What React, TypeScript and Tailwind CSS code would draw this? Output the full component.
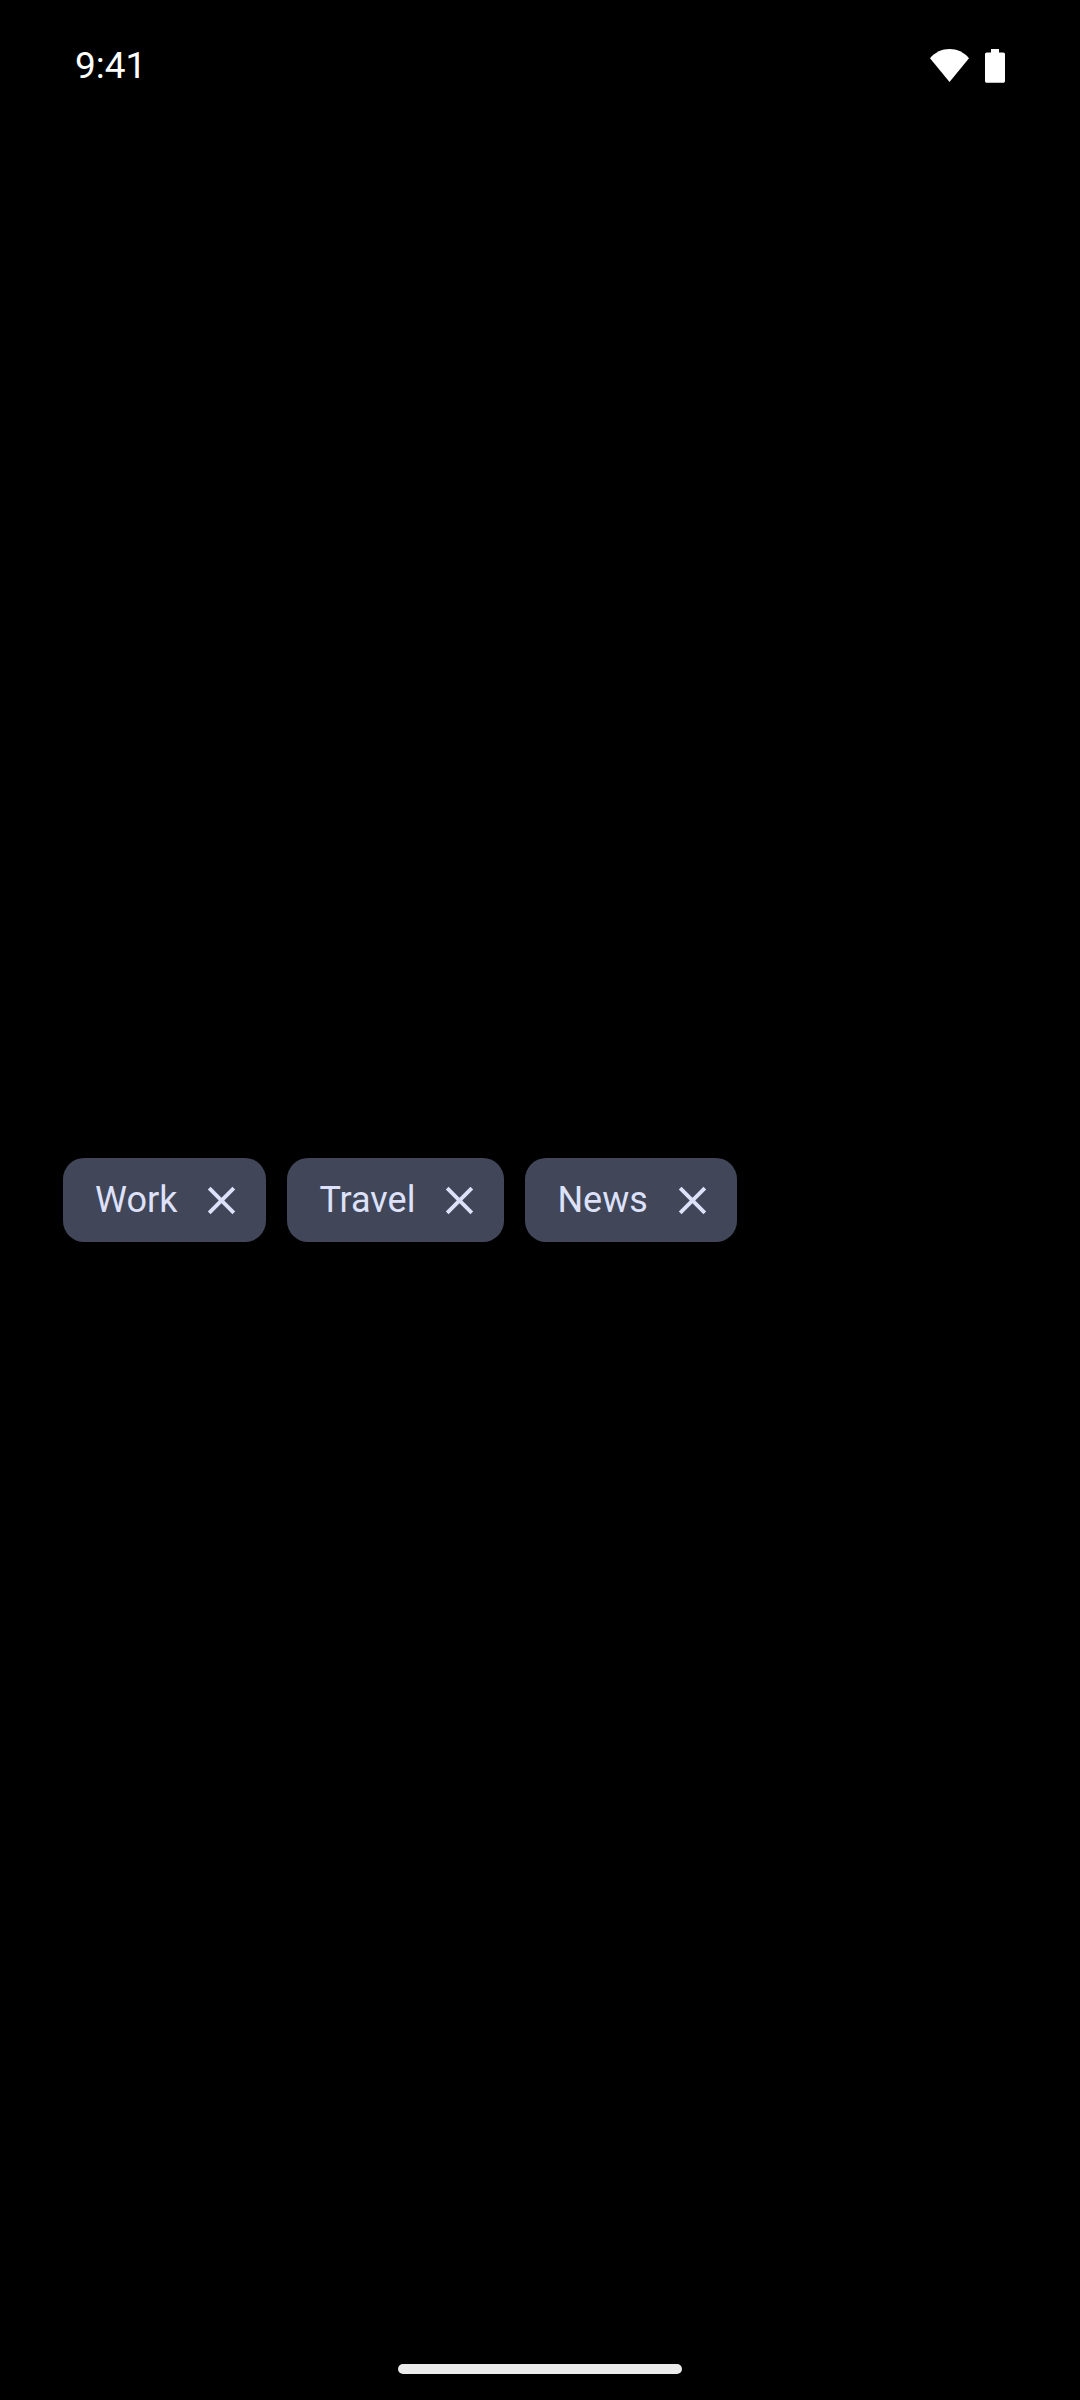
import { useState } from 'react';

const initialTags = ['Work', 'Travel', 'News'];

const WifiIcon = () => (
  <svg width="39" height="34" viewBox="0 0 39 34" fill="currentColor" aria-hidden="true">
    <path d="M19.5 33 0 9.2C5 3.2 12 0 19.5 0S34 3.2 39 9.2Z" />
  </svg>
);

const BatteryIcon = () => (
  <svg width="20" height="34" viewBox="0 0 20 34" fill="currentColor" aria-hidden="true">
    <path d="M6 0h8v3.5h4.2c1 0 1.8.8 1.8 1.8v26.6c0 1-.8 1.8-1.8 1.8H1.8c-1 0-1.8-.8-1.8-1.8V5.3c0-1 .8-1.8 1.8-1.8H6Z" />
  </svg>
);

const CloseIcon = () => (
  <svg width="47" height="47" viewBox="0 0 24 24" fill="currentColor" aria-hidden="true">
    <path d="M19 6.41 17.59 5 12 10.59 6.41 5 5 6.41 10.59 12 5 17.59 6.41 19 12 13.41 17.59 19 19 17.59 13.41 12z" />
  </svg>
);

const StatusBar = () => (
  <header className="flex h-[132px] items-center justify-between px-[75px] text-white">
    <time className="text-[37px] leading-[48px]">9:41</time>
    <div className="flex items-center gap-4">
      <WifiIcon />
      <BatteryIcon />
    </div>
  </header>
);

const Chip = ({ label, onRemove }: { label: string; onRemove: () => void }) => (
  <li className="flex h-[84px] items-center gap-[21px] rounded-[21px] bg-[#414659] pr-[21px] pl-8 text-[#dde1f9]">
    <span className="text-[36px] leading-[48px]">{label}</span>
    <button type="button" aria-label={`Remove ${label}`} onClick={onRemove}>
      <CloseIcon />
    </button>
  </li>
);

const App = () => {
  const [tags, setTags] = useState(initialTags);

  return (
    <div className="flex min-h-screen flex-col bg-black font-[Roboto,sans-serif]">
      <StatusBar />
      <main className="flex flex-1 items-center px-[63px]">
        <ul className="flex flex-wrap gap-[21px]">
          {tags.map((tag) => (
            <Chip key={tag} label={tag} onRemove={() => setTags(tags.filter((t) => t !== tag))} />
          ))}
        </ul>
      </main>
      <footer className="flex h-[132px] items-end justify-center pb-[26px]">
        <div className="h-[10px] w-[284px] rounded-full bg-[#ebebeb]" />
      </footer>
    </div>
  );
};

export default App;
